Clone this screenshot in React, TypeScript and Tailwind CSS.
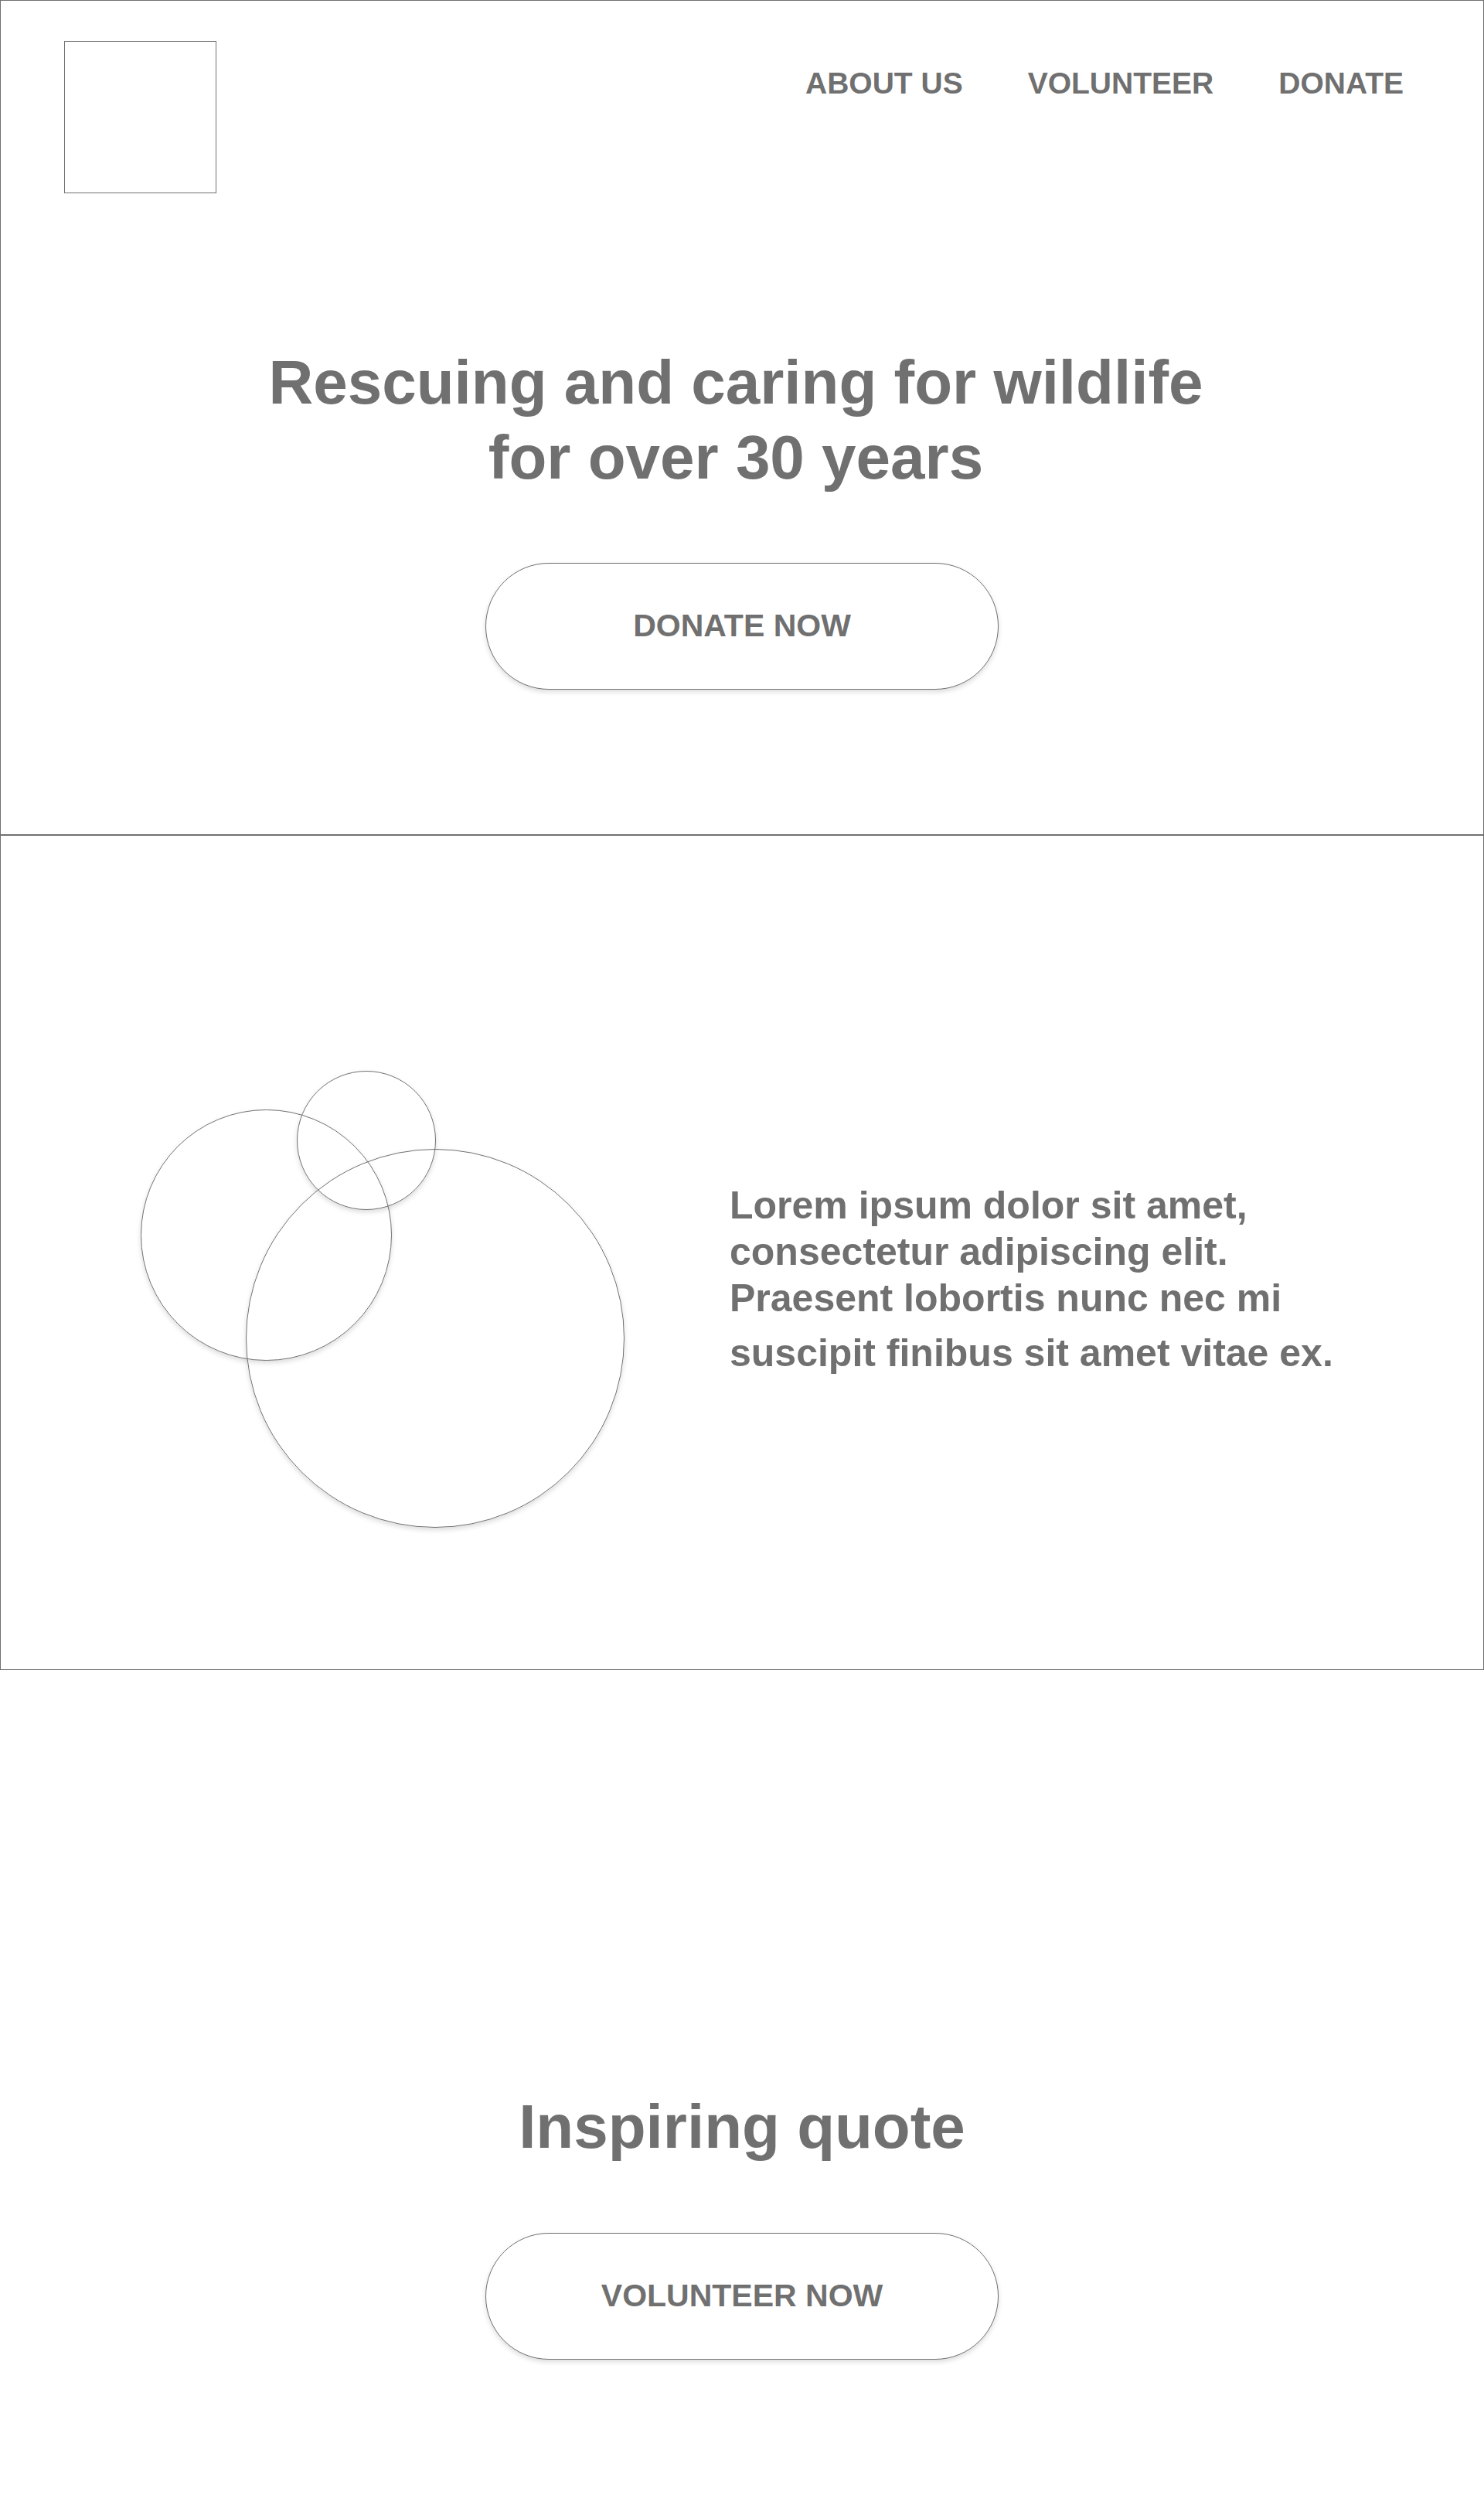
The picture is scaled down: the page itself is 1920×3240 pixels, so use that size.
export default function App() {
  return (
    <div className="w-[1920px] bg-white font-['Liberation_Sans',Arial,sans-serif] font-bold text-[#707070]">
      {/* Hero */}
      <section className="h-[1080px] border border-[#707070]">
        <header className="flex items-start justify-between pl-[82px] pr-[103px] pt-[52px]">
          <div className="w-[197px] h-[197px] border border-[#707070]" />
          <nav className="mt-[35px] flex gap-[84px] text-[39px] leading-[39px]">
            <a>ABOUT US</a>
            <a>VOLUNTEER</a>
            <a>DONATE</a>
          </nav>
        </header>

        <div className="flex flex-col items-center">
          <h1 className="mt-[196px] pr-[16px] text-center text-[80px] leading-[97px]">
            Rescuing and caring for wildlife
            <br />
            for over 30 years
          </h1>
          <button className="mt-[88px] w-[664px] h-[164px] rounded-full border border-[#707070] bg-white text-[41px] shadow-[0_3px_6px_rgba(0,0,0,0.14)]">
            DONATE NOW
          </button>
        </div>
      </section>

      {/* About */}
      <section className="h-[1080px] border border-[#707070] pl-[181px] flex items-start">
        <div className="relative mt-[304px] w-[626px] h-[591px] shrink-0">
          <div className="absolute left-[202px] top-0 w-[180px] h-[180px] rounded-full border border-[#707070] shadow-[0_3px_6px_rgba(0,0,0,0.14)]" />
          <div className="absolute left-0 top-[50px] w-[325px] h-[325px] rounded-full border border-[#707070] shadow-[0_3px_6px_rgba(0,0,0,0.14)]" />
          <div className="absolute left-[136px] top-[101px] w-[490px] h-[490px] rounded-full border border-[#707070] shadow-[0_3px_6px_rgba(0,0,0,0.14)]" />
        </div>
        <div className="ml-[136px] mt-[448px] text-[50px] leading-[60px]">
          <p>
            Lorem ipsum dolor sit amet,
            <br />
            consectetur adipiscing elit.
            <br />
            Praesent lobortis nunc nec mi
          </p>
          <p className="mt-[11px]">suscipit finibus sit amet vitae ex.</p>
        </div>
      </section>

      {/* Quote */}
      <section className="h-[1080px] pt-[543px] flex flex-col items-center">
        <h2 className="text-[80px] leading-[96px]">Inspiring quote</h2>
        <button className="mt-[89px] w-[664px] h-[164px] rounded-full border border-[#707070] bg-white text-[41px] shadow-[0_3px_6px_rgba(0,0,0,0.14)]">
          VOLUNTEER NOW
        </button>
      </section>
    </div>
  );
}
